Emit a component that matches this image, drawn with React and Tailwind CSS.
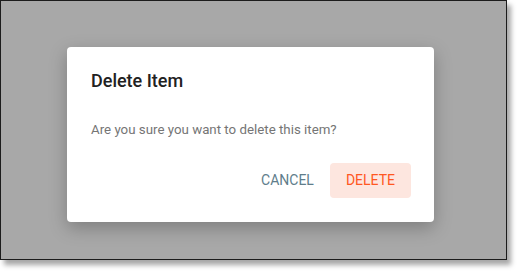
export default function App() {
  return (
    <div className="w-[517px] h-[272px] bg-white" style={{ fontFamily: "Roboto, 'Noto Sans', sans-serif" }}>
      <div className="w-[507px] h-[260px] border border-[#1c1c1c] bg-[#a8a8a8] shadow-[4px_5px_5px_rgba(0,0,0,0.35)] pl-[66px] pt-[46px]">
        <div className="w-[367px] h-[175px] bg-white rounded-[4px] shadow-[0_6px_18px_rgba(0,0,0,0.25)] flex flex-col pl-6 pr-[23px] pt-[22px] pb-6">
          <div className="text-[18px] leading-[24px] font-medium text-[#212121]">Delete Item</div>
          <div className="mt-[27px] text-[13.3px] leading-[20px] text-[#757575]">Are you sure you want to delete this item?</div>
          <div className="mt-auto flex justify-end items-center">
            <button className="h-[35px] px-4 text-[14px] uppercase text-[#607d8b] rounded-[4px]">Cancel</button>
            <button className="h-[35px] px-4 text-[14px] uppercase text-[#ff5722] bg-[#fde6df] rounded-[4px]">Delete</button>
          </div>
        </div>
      </div>
    </div>
  );
}
